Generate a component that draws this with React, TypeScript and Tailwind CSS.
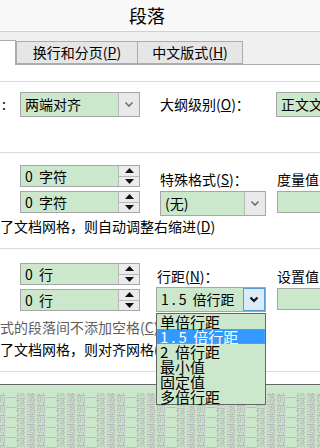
import { ReactNode } from "react";

// ─────────────────────────────────────────────────────────────
// Small controls
// ─────────────────────────────────────────────────────────────

const green = "bg-[#cce8cc]";

function Chevron({ focus }: { focus?: boolean }) {
  return (
    <svg width="10" height="7" viewBox="0 0 10 7">
      <path
        d="M1.5 1.5 L5 5 L8.5 1.5"
        fill="none"
        stroke={focus ? "#111" : "#707070"}
        strokeWidth={focus ? 2.2 : 1.6}
      />
    </svg>
  );
}

function Select({
  value,
  className,
  focus,
}: {
  value: ReactNode;
  className: string;
  focus?: boolean;
}) {
  return (
    <div className={`flex h-[25px] border border-[#a7a7a7] ${green} ${className}`}>
      <div className="flex-1 overflow-hidden whitespace-pre pl-[4px] leading-[23px]">
        {value}
      </div>
      <div
        className={
          focus
            ? "flex w-[22px] items-center justify-center border border-[#5b9bd5] bg-[#dcebfa]"
            : "flex w-[21px] items-center justify-center border-l border-[#b9b9b9] bg-[#e9e9e9]"
        }
      >
        <Chevron focus={focus} />
      </div>
    </div>
  );
}

function Arrow({ up }: { up?: boolean }) {
  return (
    <svg width="9" height="5" viewBox="0 0 9 5">
      <path d={up ? "M0 5 L4.5 0 L9 5 Z" : "M0 0 L4.5 5 L9 0 Z"} fill="#111" />
    </svg>
  );
}

function Spinner({ value }: { value: string }) {
  return (
    <div className={`flex h-[22px] w-[120px] border border-[#a7a7a7] ${green}`}>
      <div className="flex-1 whitespace-pre pl-[4px] leading-[20px]">{value}</div>
      <div className="flex w-[21px] flex-col border-l border-[#b9b9b9] bg-[#ececec]">
        <div className="flex flex-1 items-center justify-center border-b border-[#b9b9b9]">
          <Arrow up />
        </div>
        <div className="flex flex-1 items-center justify-center">
          <Arrow />
        </div>
      </div>
    </div>
  );
}

function Input({ className }: { className: string }) {
  return <div className={`h-[22px] border border-[#a7a7a7] ${green} ${className}`} />;
}

function Rule({ className }: { className: string }) {
  return <div className={`h-px bg-[#dadada] ${className}`} />;
}

function Tab({ children, className }: { children: ReactNode; className: string }) {
  return (
    <div
      className={`flex h-[23px] items-center justify-center border border-[#acacac] bg-[#e6e6e6] text-[14px] ${className}`}
    >
      {children}
    </div>
  );
}

const OneHalf = () => (
  <>
    <span className="tracking-[3px]">1.5</span> 倍行距
  </>
);

const spacing: ReactNode[] = ["单倍行距", <OneHalf key="h" />, "2  倍行距", "最小值", "固定值", "多倍行距"];

// ─────────────────────────────────────────────────────────────
// Dialog
// ─────────────────────────────────────────────────────────────

export default function App() {
  const preview = "前一段落".repeat(12);

  return (
    <div className="relative h-[448px] w-[320px] overflow-hidden bg-white font-['SimSun','Noto_Sans_CJK_SC',sans-serif] text-[14px] text-black">
      {/* Title bar */}
      <div className="h-[32px] border-b border-[#d2d2d2] bg-[#f9f9f9] pl-[129px] text-[18px] leading-[30px]">
        段落
      </div>

      {/* Tabs */}
      <div className="flex h-[33px] items-end border-b border-[#acacac] bg-[#f0f0f0]">
        <div className="-mb-px h-[25px] w-[16px] border-r border-t border-[#acacac] bg-white" />
        <Tab className="w-[122px]">
          换行和分页(<span className="underline">P</span>)
        </Tab>
        <Tab className="-ml-px w-[106px]">
          中文版式(<span className="underline">H</span>)
        </Tab>
      </div>

      {/* General */}
      <Rule className="mt-[16px]" />
      <div className="mt-[10px] flex h-[25px] items-center *:shrink-0">
        <div className="w-[20px] pl-[2px]">:</div>
        <Select value="两端对齐" className="w-[120px]" />
        <div className="w-[20px]" />
        <div className="w-[116px] whitespace-nowrap">
          大纲级别(<span className="underline">O</span>)：
        </div>
        <Select value="正文文本" className="w-[110px]" />
      </div>
      <Rule className="mt-[35px]" />

      {/* Indentation */}
      <div className="mt-[12px] flex h-[22px] items-end *:shrink-0">
        <div className="w-[20px]" />
        <Spinner value="0  字符" />
        <div className="w-[20px]" />
        <div className="w-[117px] whitespace-nowrap leading-[16px]">
          特殊格式(<span className="underline">S</span>)：
        </div>
        <div className="whitespace-nowrap leading-[16px]">度量值(Y)</div>
      </div>
      <div className="mt-[4px] flex h-[25px] items-start *:shrink-0">
        <div className="w-[20px]" />
        <Spinner value="0  字符" />
        <div className="w-[20px]" />
        <Select value="(无)" className="w-[106px]" />
        <div className="w-[11px]" />
        <Input className="w-[80px]" />
      </div>
      <div className="mt-[2px] h-[16px] whitespace-nowrap leading-[16px]">
        了文档网格，则自动调整右缩进(<span className="underline">D</span>)
      </div>
      <Rule className="mt-[14px]" />

      {/* Spacing */}
      <div className="mt-[14px] flex h-[22px] items-end *:shrink-0">
        <div className="w-[20px]" />
        <Spinner value="0  行" />
        <div className="w-[17px]" />
        <div className="w-[120px] whitespace-nowrap leading-[18px]">
          行距(<span className="underline">N</span>)：
        </div>
        <div className="whitespace-nowrap leading-[18px]">设置值(A)</div>
      </div>
      <div className="mt-[2px] flex h-[24px] items-start *:shrink-0">
        <div className="w-[20px]" />
        <div className="mt-[2px]">
          <Spinner value="0  行" />
        </div>
        <div className="w-[16px]" />
        <Select value={<OneHalf />} className="h-[24px] w-[110px]" focus />
        <div className="w-[11px]" />
        <div className="mt-[1px]">
          <Input className="w-[80px]" />
        </div>
      </div>
      <div className="mt-[6px] h-[20px] whitespace-nowrap leading-[20px] text-[#5e5e5e]">
        式的段落间不添加空格(<span className="underline">C</span>)
      </div>
      <div className="mt-[2px] h-[20px] whitespace-nowrap leading-[20px]">
        了文档网格，则对齐网格(<span className="underline">W</span>)
      </div>
      <Rule className="mt-[12px]" />

      {/* Preview */}
      <div className={`mt-[12px] h-[70px] border-t border-[#666] ${green} pt-[8px]`}>
        {[0, 1, 2, 3, 4, 5].map((i) => (
          <div
            key={i}
            className="-ml-[4px] h-[10px] whitespace-nowrap text-[10px] leading-[10px] text-[#b4b4b4]"
          >
            {preview}
          </div>
        ))}
      </div>

      {/* Open line-spacing list */}
      <div className={`absolute left-[156px] top-[313px] w-[110px] border border-[#666] ${green}`}>
        {spacing.map((s, i) => (
          <div
            key={i}
            className={
              i === 1
                ? "h-[15px] whitespace-pre border border-dotted border-[#e08a3a] bg-[#3399ff] pl-[2px] text-[15px] leading-[13px] text-white"
                : "h-[15px] whitespace-pre pl-[3px] text-[15px] leading-[15px]"
            }
          >
            {s}
          </div>
        ))}
      </div>
    </div>
  );
}
